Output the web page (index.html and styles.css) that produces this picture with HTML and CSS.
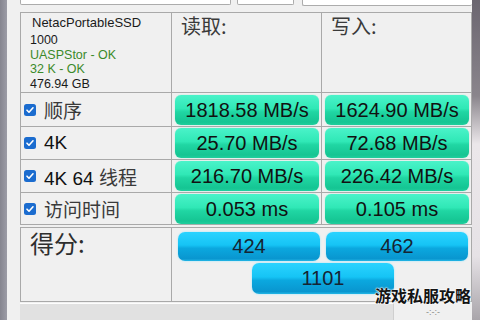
FILE: index.html
```html
<!doctype html>
<html lang="zh-CN">
  <head>
    <meta charset="utf-8">
    <title>CrystalDiskMark</title>
    <link rel="stylesheet" href="styles.css">
  </head>
  <body>
    <div class="edge edge-left"></div>
    <div class="window">
      <div class="toolbar">
        <div class="field field-drive"></div>
        <div class="field field-unit"></div>
        <div class="field field-info"></div>
      </div>

      <div class="bench">
        <div class="cell info">
          <div class="model">NetacPortableSSD</div>
          <div>1000</div>
          <div class="ok">UASPStor - OK</div>
          <div class="ok">32 K - OK</div>
          <div>476.94 GB</div>
        </div>
        <div class="cell head">读取:</div>
        <div class="cell head">写入:</div>

        <div class="cell label">
          <svg class="check" width="12" height="12" viewBox="0 0 12 12"><rect width="12" height="12" rx="2.5" fill="#1b6ccf"/><path d="M3 6.2l2 2 4-4.4" fill="none" stroke="#fff" stroke-width="1.6" stroke-linecap="round" stroke-linejoin="round"/></svg>
          <span class="cjk">顺序</span>
        </div>
        <div class="cell val"><div class="meter">1818.58 MB/s</div></div>
        <div class="cell val"><div class="meter">1624.90 MB/s</div></div>

        <div class="cell label">
          <svg class="check" width="12" height="12" viewBox="0 0 12 12"><rect width="12" height="12" rx="2.5" fill="#1b6ccf"/><path d="M3 6.2l2 2 4-4.4" fill="none" stroke="#fff" stroke-width="1.6" stroke-linecap="round" stroke-linejoin="round"/></svg>
          <span>4K</span>
        </div>
        <div class="cell val"><div class="meter">25.70 MB/s</div></div>
        <div class="cell val"><div class="meter">72.68 MB/s</div></div>

        <div class="cell label">
          <svg class="check" width="12" height="12" viewBox="0 0 12 12"><rect width="12" height="12" rx="2.5" fill="#1b6ccf"/><path d="M3 6.2l2 2 4-4.4" fill="none" stroke="#fff" stroke-width="1.6" stroke-linecap="round" stroke-linejoin="round"/></svg>
          <span>4K 64 <span class="cjk">线程</span></span>
        </div>
        <div class="cell val"><div class="meter">216.70 MB/s</div></div>
        <div class="cell val"><div class="meter">226.42 MB/s</div></div>

        <div class="cell label">
          <svg class="check" width="12" height="12" viewBox="0 0 12 12"><rect width="12" height="12" rx="2.5" fill="#1b6ccf"/><path d="M3 6.2l2 2 4-4.4" fill="none" stroke="#fff" stroke-width="1.6" stroke-linecap="round" stroke-linejoin="round"/></svg>
          <span class="cjk">访问时间</span>
        </div>
        <div class="cell val"><div class="meter">0.053 ms</div></div>
        <div class="cell val"><div class="meter">0.105 ms</div></div>
      </div>

      <div class="score">
        <div class="cell score-title">得分:</div>
        <div class="cell score-vals">
          <div class="pill">424</div>
          <div class="pill">462</div>
          <div class="pill total">1101</div>
        </div>
      </div>

      <div class="status">
        <div class="status-bar"></div>
        <div class="status-time">-:-:-</div>
      </div>

      <div class="watermark">游戏私服攻略</div>
    </div>
    <div class="edge edge-right"></div>
  </body>
</html>
```

FILE: styles.css
```css
body {
  margin: 0;
  height: 320px;
  overflow: hidden;
  display: flex;
  background: #f0f0f0;
  font-family: "Liberation Sans", Arial, "Noto Sans CJK SC", sans-serif;
  color: #111;
}
.edge-left {
  width: 7px;
  background: linear-gradient(to right, #85858f, #9c9ca6);
}
.edge-right {
  width: 8px;
  background: linear-gradient(#6b6670, #8a858c 30%, #ebe7ea 45%, #e6e2e6 80%, #a9a5aa);
}
.window {
  position: relative;
  width: 465px;
  box-sizing: border-box;
  padding-left: 13px;
  display: flex;
  flex-direction: column;
}

/* top inputs, cut off by the screenshot */
.toolbar {
  height: 12px;
  display: flex;
  align-items: flex-start;
}
.field {
  background: #fff;
  border: 1px solid #acacac;
  border-top: 0;
  height: 4px;
  border-radius: 0 0 2px 2px;
}
.field-drive { width: 209px; }
.field-unit { width: 55px; margin-left: 6px; }
.field-info { flex: 1; margin-left: 8px; height: 5px; border-right: 0; }

/* main table */
.bench,
.score {
  display: grid;
  gap: 1px;
  background: #a9a9a9;
  border: 1px solid #a9a9a9;
  width: max-content;
}
.bench {
  grid-template-columns: 150px 149px 149px;
  grid-template-rows: 79px 33px 32px 32px 31px;
}
.cell {
  background: #f0f0f0;
  box-sizing: border-box;
}
.info {
  padding: 3px 0 0 9px;
  font-size: 12.5px;
  line-height: 14.5px;
  color: #1a1a1a;
}
.info .model {
  font-size: 13px;
  line-height: 14px;
  padding-left: 2px;
  margin-bottom: 3px;
}
.info .ok {
  color: #3b8a2a;
}
.head {
  padding: 1px 0 0 9px;
  font-family: "Noto Sans CJK SC", sans-serif;
  font-size: 20px;
  line-height: 24px;
  color: #3a3a3a;
}
.label {
  display: flex;
  align-items: center;
  gap: 8px;
  padding-left: 3px;
  font-size: 19px;
  color: #111;
}
.label .cjk {
  color: #3a3a3a;
}
.check {
  flex: none;
}
.val {
  display: flex;
  align-items: center;
  padding: 0 2px 0 3px;
}
.meter {
  flex: 1;
  height: 30px;
  border-radius: 6px;
  background: linear-gradient(#4af3c9, #30e8b6 45%, #20d6a3 56%, #15c593 90%, #1fcf9d);
  box-shadow: 0 0 1px #5fe8c4;
  font-size: 20px;
  line-height: 30px;
  text-align: center;
  color: #111;
}

/* score */
.score {
  margin-top: 2px;
  grid-template-columns: 150px 299px;
  grid-template-rows: 73px;
}
.score-title {
  padding: 1px 0 0 9px;
  font-family: "Noto Sans CJK SC", sans-serif;
  font-size: 24px;
  line-height: 28px;
  color: #2e2e2e;
}
.score-vals {
  display: grid;
  grid-template-columns: 142px 142px;
  grid-template-rows: 29px 31px;
  column-gap: 6px;
  row-gap: 2px;
  padding: 4px 0 0 6px;
}
.pill {
  border-radius: 7px;
  background: linear-gradient(#2ad3ff, #16c4f5 45%, #0ba8df 56%, #0996cf 92%, #22b6e6);
  box-shadow: 0 0 2px #8fe4ff;
  font-size: 20px;
  line-height: 29px;
  text-align: center;
  color: #152433;
}
.pill.total {
  grid-column: 1 / -1;
  justify-self: center;
  width: 142px;
  line-height: 31px;
}

/* status bar */
.status {
  flex: 1;
  display: flex;
  align-items: flex-end;
}
.status-bar {
  width: 374px;
  height: 17px;
  box-sizing: border-box;
  background: #e1e1e1;
  border-top: 1px solid #fdfdfd;
  border-right: 1px solid #cfcfcf;
}
.status-time {
  flex: 1;
  text-align: center;
  font-size: 9px;
  line-height: 15px;
  color: #8a8a8a;
}

.watermark {
  position: absolute;
  left: 368px;
  top: 285px;
  font-family: "Noto Sans CJK SC", sans-serif;
  font-weight: 700;
  font-size: 16px;
  line-height: 20px;
  color: #141414;
  text-shadow: 0 0 2px #fff, 0 0 2px #fff, 0 0 1px #fff;
}
```
